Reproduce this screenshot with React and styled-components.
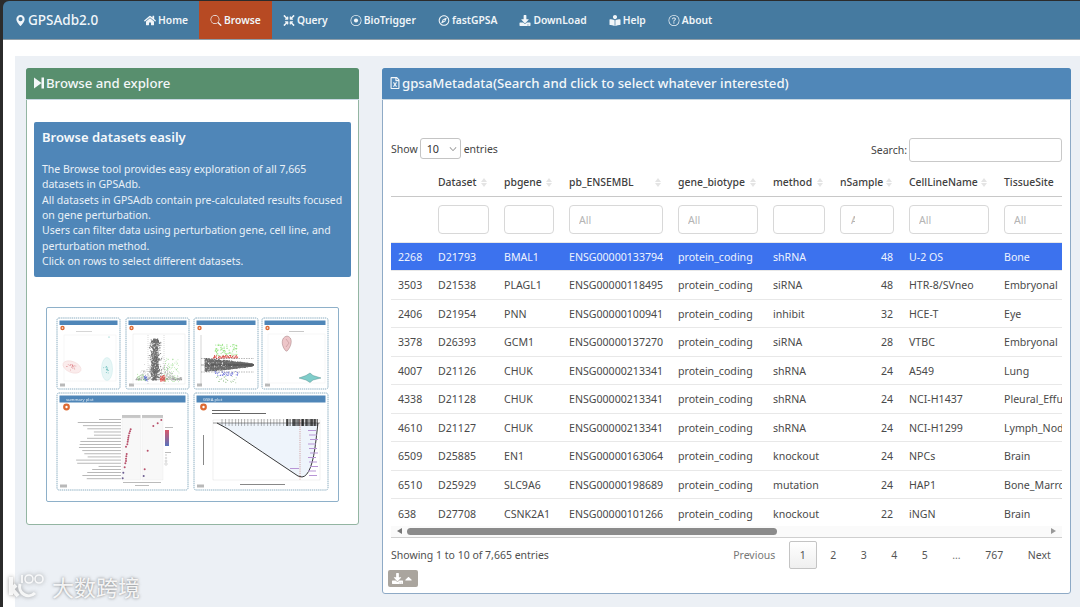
import React from "react";
import styled, { createGlobalStyle } from "styled-components";
import {
  FaHome, FaCompressArrowsAlt, FaDownload, FaBookReader, FaRegCompass, FaRegFileExcel, FaCaretUp,
} from "react-icons/fa";
import { BsSearch, BsRecordCircle, BsQuestionCircle, BsGeoAltFill, BsChevronDown } from "react-icons/bs";

const FONT = `"Noto Sans", "Open Sans", sans-serif`;

const Global = createGlobalStyle`
  html, body { margin: 0; padding: 0; background: #2b2b2b; }
  body { font-family: ${FONT}; font-size: 10.5px; color: #444; overflow: hidden; }
  * { box-sizing: border-box; }
`;

const Page = styled.div`
  width: 1080px; height: 607px; overflow: hidden; position: relative;
  padding: 1px 0 0 3px; background: #2b2b2b; display: flex; flex-direction: column;
`;
const Navbar = styled.nav`
  height: 39px; flex: none; display: flex; align-items: stretch; background: #457aa0; color: #fff;
  border-top-left-radius: 6px; border-bottom: 1px solid #8f9ea8; padding-left: 12px;
`;
const Brand = styled.div`
  width: 118px; display: flex; align-items: center; gap: 2px; font-size: 13.5px; font-weight: 500; color: #f1f6fa;
  svg { width: 11px; height: 13px; }
`;
const NavItem = styled.div`
  display: flex; align-items: center; gap: 2px; padding: 0 11px; font-size: 10.3px; font-weight: 600;
  color: #f0f5f8; background: ${(p) => (p.$active ? "#b74a23" : "transparent")};
  svg { width: 12px; height: 11px; flex: none; }
`;
const Strip = styled.div`
  height: 16px; flex: none; background: #fff;
`;
const Body = styled.div`
  flex: 1; display: flex; background: #fff; padding-left: 12px; min-height: 0;
`;
const Content = styled.main`
  flex: 1; background: #ecf0f5; padding: 12px 9px 0 11px; display: flex; gap: 23px; align-items: flex-start;
`;
const Panel = styled.section`
  width: ${(p) => p.$w}px; height: ${(p) => p.$h}px; flex: none; background: #fff; border-radius: 3px;
  border: 1px solid ${(p) => p.$line}; display: flex; flex-direction: column;
`;
const PanelHead = styled.header`
  height: 32px; flex: none; margin: -1px -1px 0; border-radius: 3px 3px 0 0; background: ${(p) => p.$bg};
  color: #f4f7f9; display: flex; align-items: center; gap: 2px; padding: 0 0 2px 8px;
  font-size: 13.2px; font-weight: 500; border-bottom: 1px solid #c9d8e2;
  svg { width: 10px; height: 12px; flex: none; }
`;
const LeftBody = styled.div`
  padding: 22px 7px 0; display: flex; flex-direction: column; gap: 30px;
`;
const Info = styled.div`
  background: #4f86b8; border-radius: 2px; height: 155px; padding: 6px 8px; color: #eaf1f7;
`;
const InfoTitle = styled.h3`
  margin: 0 0 16px; font-size: 13px; line-height: 18px; font-weight: 600; color: #f6f9fb;
`;
const InfoText = styled.p`
  margin: 0; font-size: 10.5px; line-height: 15.35px; white-space: nowrap;
`;
const Figure = styled.div`
  margin: 0 12px; height: 195px; border: 1px solid #8eb0c9; border-radius: 2px; background: #fff; overflow: hidden;
  svg { display: block; filter: blur(0.4px); }
`;
const RightBody = styled.div`
  flex: 1; padding: 38px 8px 0; display: flex; flex-direction: column; min-height: 0;
`;
const TopBar = styled.div`
  height: 23px; flex: none; display: flex; justify-content: space-between; align-items: flex-start;
`;
const Group = styled.label`
  display: flex; align-items: center; gap: 2px; height: 21px;
`;
const LenSelect = styled.div`
  width: 41px; height: 21px; margin: 0 1px 0 0; border: 1px solid #c4c4c4; border-radius: 3px; display: flex; align-items: center;
  justify-content: space-between; padding: 0 3px 0 6px; color: #333; font-size: 10.8px;
  svg { width: 8px; height: 8px; color: #555; }
`;
const SearchBox = styled.div`
  display: flex; align-items: center; gap: 2px; height: 24px;
`;
const SearchInput = styled.input`
  width: 153px; height: 24px; border: 1px solid #c9c9c9; border-radius: 3px; background: #fff; outline: none;
`;
const TableWrap = styled.div`
  height: 365px; flex: none; overflow: hidden; width: 671px; margin-top: 0;
`;
const Table = styled.table`
  table-layout: fixed; width: 720px; border-collapse: collapse; font-size: 10.6px; color: #4a4a4a;
`;
const Th = styled.th`
  height: 35px; padding: 8px 10px 0 7px; font-size: 10.4px; font-weight: 500; text-align: left; border-bottom: 1px solid #c8c8c8; white-space: nowrap; overflow: hidden; color: #404040;
`;
const ThInner = styled.div`
  display: flex; align-items: center; justify-content: space-between;
`;
const Sort = styled.span`
  display: inline-flex; flex-direction: column; gap: 1px;
  i { width: 0; height: 0; border-left: 3px solid transparent; border-right: 3px solid transparent; display: block; }
  i:first-child { border-bottom: 4px solid #e4e4e4; }
  i:last-child { border-top: 4px solid #e4e4e4; }
`;
const FilterCell = styled.td`
  height: 46px; padding: 1px 8px 0 7px; border-bottom: 0;
`;
const Filter = styled.input`
  width: 100%; height: 29px; border: 1px solid #d8d8d8; border-radius: 4px; outline: none; background: #fff; display: block;
  font-family: ${FONT}; font-size: 10.6px; padding: 0 ${(p) => (p.$narrow ? 38 : 6)}px 0 ${(p) => (p.$narrow ? 10 : 9)}px;
  &::placeholder { color: #b4b4b4; }
`;
const Row = styled.tr`
  height: 28.5px; background: ${(p) => (p.$sel ? "#3c72ee" : "#fff")}; color: ${(p) => (p.$sel ? "#eef3fd" : "#4a4a4a")};
  border-top: 1px solid #e8e8e8;
`;
const Td = styled.td`
  padding: 1px ${(p) => (p.$num ? 9 : 4)}px 0 7px; white-space: nowrap; overflow: hidden; text-align: ${(p) => (p.$num ? "right" : "left")};
`;
const ScrollBar = styled.div`
  height: 12px; flex: none; background: #fafafa; border-bottom: 1px solid #cfcfcf; display: flex; align-items: center;
  padding: 0 6px 1px 6px; gap: 5px; width: 671px;
`;
const Arrow = styled.i`
  width: 0; height: 0; border-top: 3.5px solid transparent; border-bottom: 3.5px solid transparent;
  ${(p) => (p.$dir === "l" ? "border-right: 5px solid #777;" : "border-left: 5px solid #999;")}
`;
const Track = styled.div`
  flex: 1; height: 7px;
`;
const Thumb = styled.div`
  width: 370px; height: 7px; background: #8b8b8b; border-radius: 4px;
`;
const Footer = styled.div`
  display: flex; justify-content: space-between; align-items: flex-start; padding-top: 3px; width: 671px;
`;
const Showing = styled.div`
  margin-top: 7px; color: #505050;
`;
const Pager = styled.div`
  display: flex; gap: 2px; align-items: center;
`;
const PageBtn = styled.div`
  height: 28px; padding: 0 10.25px; display: flex; align-items: center; color: ${(p) => (p.$muted ? "#777" : "#555")};
  border-radius: 2px; border: 1px solid ${(p) => (p.$cur ? "#c4c4c4" : "transparent")};
  background: ${(p) => (p.$cur ? "linear-gradient(#fff, #efefef)" : "transparent")};
`;
const DlBtn = styled.button`
  width: 30px; height: 17px; margin: 1px 0 0 -3px; border: 0; border-radius: 2px; background: #aaa59e; color: #fff; padding: 0;
  display: flex; align-items: center; justify-content: center; gap: 0; align-self: flex-start;
  svg { width: 11px; height: 11px; }
`;
const Watermark = styled.div`
  position: absolute; left: 9px; top: 570px; display: flex; align-items: center; gap: 3px; color: rgba(255,255,255,.9);
  font-family: "Noto Sans CJK SC", sans-serif; font-size: 22px; letter-spacing: 0; line-height: 32px;
  text-shadow: 0 0 3px rgba(70,70,70,.7);
  svg { filter: drop-shadow(0 0 2px rgba(70,70,70,.6)); }
`;

const SkipIcon = () => (
  <svg viewBox="0 0 10 12"><path d="M0 .5 L7.5 6 L0 11.5Z M7.5 .5 H10 V11.5 H7.5Z" fill="currentColor" /></svg>
);

const nav = [
  [FaHome, "Home"], [BsSearch, "Browse", true], [FaCompressArrowsAlt, "Query"], [BsRecordCircle, "BioTrigger"],
  [FaRegCompass, "fastGPSA"], [FaDownload, "DownLoad"], [FaBookReader, "Help"], [BsQuestionCircle, "About"],
];
const cols = [
  ["", 40], ["Dataset", 66], ["pbgene", 65], ["pb_ENSEMBL", 109], ["gene_biotype", 95], ["method", 67], ["nSample", 69], ["CellLineName", 95], ["TissueSite", 114],
];
const rows = [
  ["2268","D21793","BMAL1","ENSG00000133794","protein_coding","shRNA","48","U-2 OS","Bone"],
  ["3503","D21538","PLAGL1","ENSG00000118495","protein_coding","siRNA","48","HTR-8/SVneo","Embryonal"],
  ["2406","D21954","PNN","ENSG00000100941","protein_coding","inhibit","32","HCE-T","Eye"],
  ["3378","D26393","GCM1","ENSG00000137270","protein_coding","siRNA","28","VTBC","Embryonal"],
  ["4007","D21126","CHUK","ENSG00000213341","protein_coding","shRNA","24","A549","Lung"],
  ["4338","D21128","CHUK","ENSG00000213341","protein_coding","shRNA","24","NCI-H1437","Pleural_Effusion"],
  ["4610","D21127","CHUK","ENSG00000213341","protein_coding","shRNA","24","NCI-H1299","Lymph_Node"],
  ["6509","D25885","EN1","ENSG00000163064","protein_coding","knockout","24","NPCs","Brain"],
  ["6510","D25929","SLC9A6","ENSG00000198689","protein_coding","mutation","24","HAP1","Bone_Marrow"],
  ["638","D27708","CSNK2A1","ENSG00000101266","protein_coding","knockout","22","iNGN","Brain"],
];

function rng(seed) {
  let s = seed;
  return () => { s = (s * 16807) % 2147483647; return s / 2147483647; };
}
const gauss = (r) => (r() + r() + r() + r() - 2);

function Card({ x, y, w, h, title, big }) {
  return (
    <g>
      <rect x={x} y={y} width={w} height={h} rx="2" fill="#fff" stroke="#6f9bb3" strokeWidth="0.8" strokeDasharray="1.4 0.7" />
      <rect x={x + 2.5} y={y + 2.5} width={w - 5} height={big ? 7 : 4.5} fill="#4f86b8" />
      {title && <text x={x + 9} y={y + 8} fontSize="4.2" fill="#e8f0f6" fontFamily={FONT}>{title}</text>}
      <circle cx={x + (big ? 9.5 : 5.5)} cy={y + (big ? 14 : 10)} r={big ? 3.4 : 2.2} fill="#dd6a33" />
      <circle cx={x + (big ? 9.5 : 5.5)} cy={y + (big ? 14 : 10)} r={big ? 1.2 : 0.8} fill="#fff" />
      <rect x={x + 3} y={y + h - 5.5} width={big ? 7 : 5} height="3" fill="#b9b9b9" />
    </g>
  );
}

function Pca() {
  const r = rng(11);
  const d = [];
  for (let i = 0; i < 22; i++) d.push(<circle key={i} cx={72 + gauss(r) * 4} cy={366 + gauss(r) * 2.6 + gauss(r)} r=".45" fill="#d9747a" />);
  for (let i = 0; i < 14; i++) d.push(<circle key={"t" + i} cx={107 + gauss(r) * 2} cy={369 + gauss(r) * 4.5} r=".45" fill="#3ea9a6" />);
  return (
    <g>
      <Card x={57} y={318} w={63} h={71} />
      <rect x={64} y={335} width={52} height={46} fill="none" stroke="#eee" strokeWidth=".5" />
      <rect x={76} y={331} width={16} height=".8" fill="#ccc" />
      <ellipse cx={72} cy={367} rx={9.5} ry={5.5} transform="rotate(22 72 367)" fill="#fbecec" stroke="#eccaca" strokeWidth=".4" />
      <ellipse cx={107} cy={369} rx={5.5} ry={11.5} fill="#e7f6f6" stroke="#bde5e5" strokeWidth=".4" />
      {d}
      <circle cx={109} cy={337} r=".5" fill="#3ea9a6" />
    </g>
  );
}

function Volcano() {
  const r = rng(23);
  const d = [];
  for (let i = 0; i < 500; i++) {
    const x = 136 + r() * 46;
    const dist = Math.abs(x - 156);
    const y = 380 - r() * r() * Math.max(4, 40 - dist * 2.0);
    d.push(<circle key={"s" + i} cx={x} cy={y} r=".38" fill="#9c9c9c" />);
  }
  for (let i = 0; i < 650; i++) {
    d.push(<circle key={i} cx={155 + gauss(r) * 4} cy={339 + r() * 41} r=".5" fill="#666" />);
  }
  for (let i = 0; i < 90; i++) {
    const x = 164 + r() * 15;
    d.push(<circle key={"g" + i} cx={x} cy={358 + r() * 24} r=".4" fill="#7fd26f" />);
  }
  for (let i = 0; i < 30; i++) d.push(<circle key={"l" + i} cx={137 + r() * 9} cy={374 + r() * 7} r=".45" fill="#7fd26f" />);
  for (let i = 0; i < 25; i++) d.push(<circle key={"b" + i} cx={144 + r() * 4} cy={376 + r() * 5} r=".45" fill="#5560d8" />);
  for (let i = 0; i < 35; i++) d.push(<circle key={"r" + i} cx={160 + r() * 5} cy={375 + r() * 6} r=".5" fill="#e0403c" />);
  return (
    <g>
      <Card x={126} y={318} w={63} h={71} />
      <rect x={133} y={334} width={52} height={50} fill="none" stroke="#e5e5e5" strokeWidth=".5" />
      {d}
      <line x1="148" y1="335" x2="148" y2="384" stroke="#999" strokeWidth=".35" strokeDasharray="1 1" />
      <line x1="164" y1="335" x2="164" y2="384" stroke="#999" strokeWidth=".35" strokeDasharray="1 1" />
    </g>
  );
}

function Ma() {
  const r = rng(37);
  const d = [];
  for (let i = 0; i < 1100; i++) {
    const t = r();
    const x = 205 + t * 48;
    const s = 6 * Math.pow(1 - t, 0.7) + 0.5;
    d.push(<circle key={i} cx={x} cy={365 + (r() - .5) * 2 * s} r=".6" fill="#6a6a6a" />);
  }
  for (let i = 0; i < 80; i++) d.push(<circle key={"g" + i} cx={215 + r() * 22} cy={344 + r() * 12} r=".55" fill="#93e37f" />);
  for (let i = 0; i < 55; i++) d.push(<circle key={"r" + i} cx={212 + r() * 26} cy={355.5 + r() * 3} r=".55" fill="#d9413c" />);
  for (let i = 0; i < 50; i++) d.push(<circle key={"b" + i} cx={214 + r() * 24} cy={371 + r() * 5} r=".5" fill="#6d73d8" />);
  for (let i = 0; i < 28; i++) d.push(<circle key={"s" + i} cx={216 + r() * 22} cy={376 + r() * 7} r=".5" fill="#a5c99d" />);
  return (
    <g>
      <Card x={194} y={318} w={64} h={71} />
      <line x1="201" y1="335" x2="201" y2="385" stroke="#aaa" strokeWidth=".5" />
      {d}
      <line x1="201" y1="358.5" x2="254" y2="358.5" stroke="#333" strokeWidth=".35" strokeDasharray="1.5 1" />
      <line x1="201" y1="365" x2="254" y2="365" stroke="#222" strokeWidth=".4" />
      <line x1="201" y1="372" x2="254" y2="372" stroke="#333" strokeWidth=".35" strokeDasharray="1.5 1" />
    </g>
  );
}

function Violin() {
  return (
    <g>
      <Card x={262} y={318} w={66} h={71} />
      <rect x={268} y={334} width={57} height={49} fill="none" stroke="#eee" strokeWidth=".5" />
      <rect x={289} y={331} width={15} height=".8" fill="#bbb" />
      <path d="M287 336 C293 337 292 345 288 350 C287 351.5 286 351.5 285 350 C281 345 281 337 287 336Z" fill="#edc5c8" stroke="#8a5f63" strokeWidth=".4" />
      <path d="M286 339 L289 343 L286 347" fill="none" stroke="#8a5f63" strokeWidth=".3" />
      <path d="M299 378 L306 375.5 L310 373 L313 375.5 L321 378 L313 380 L310 382.5 L306 380Z" fill="#7fcdca" stroke="#417f7e" strokeWidth=".4" />
    </g>
  );
}

const sumDots = [
  [272, 118], [270, 124], [268, 130], [266, 137], [265, 143], [264, 149], [263, 155], [262, 163], [258, 170],
  [260, 192], [259, 199], [258, 206], [258, 213], [256, 220], [254, 232], [250, 248], [248, 265],
  [364, 90], [353, 100], [340, 108], [323, 182], [314, 238], [311, 258],
];

function Summary() {
  const r = rng(51);
  const lines = [];
  for (let i = 0; i < 20; i++) {
    const y = 419.5 + i * 3.12;
    const w = 22 + r() * 30;
    lines.push(<rect key={"l" + i} x={121 - w} y={y - 0.35} width={w} height=".7" fill="#9a9a9a" />);
  }
  return (
    <g>
      <Card x={57} y={393} w={131} h={97} title="summary plot" big />
      <rect x={122} y={415} width={18.5} height={3} fill="#c6c6c6" />
      <rect x={142} y={415} width={21} height={3} fill="#c6c6c6" />
      <rect x={122} y={418} width={18.5} height={62} fill="#f8f8f8" stroke="#e2e2e2" strokeWidth=".3" />
      <rect x={142} y={418} width={21} height={62} fill="#f8f8f8" stroke="#e2e2e2" strokeWidth=".3" />
      {lines}
      {sumDots.map(([x, y], i) => (
        <circle key={i} cx={40 + x / 3} cy={390 + y / 3} r="1" fill={y > 240 ? "#6a5c90" : "#b8506a"} />
      ))}
      <rect x={123} y={482} width={38} height=".8" fill="#aaa" />
      <rect x={135} y={485} width={14} height=".8" fill="#aaa" />
      <defs>
        <linearGradient id="cb" x1="0" y1="0" x2="0" y2="1"><stop offset="0" stopColor="#d9596a" /><stop offset="1" stopColor="#5872bd" /></linearGradient>
      </defs>
      <rect x={165} y={430} width={4} height={16} fill="url(#cb)" />
      <rect x={165} y={427} width={8} height=".8" fill="#aaa" />
      <rect x={165} y={452} width={6} height=".8" fill="#aaa" />
      {[455, 458, 461, 464].map((y, i) => <circle key={y} cx={166} cy={y} r={0.5 + i * .25} fill="none" stroke="#888" strokeWidth=".3" />)}
    </g>
  );
}

function Gsea() {
  const r = rng(71);
  const ticks = [];
  for (let i = 0; i < 22; i++) { const x = 222 + i * 3.2 + r(); ticks.push(<line key={i} x1={x} x2={x} y1="419" y2="426" stroke="#444" strokeWidth=".4" />); }
  for (let i = 0; i < 60; i++) { const x = 285 + r() * 33; ticks.push(<line key={"d" + i} x1={x} x2={x} y1="419" y2="426" stroke="#222" strokeWidth=".45" />); }
  const labels = [];
  for (let i = 0; i < 11; i++) labels.push(<rect key={i} x={308 + (i % 3)} y={430 + i * 4.5} width={8} height="1" fill="#b895d6" />);
  return (
    <g>
      <Card x={194} y={393} w={134} h={97} title="GSEA plot" big />
      <rect x={212} y={410} width={28} height="1" fill="#666" />
      <rect x={212} y={413} width={54} height="1" fill="#666" />
      <rect x={213} y={420} width={107} height={60} fill="#fff" stroke="#d9d9d9" strokeWidth=".4" />
      <path d="M217 423 L228 429 Q262 452 298 476 L302 477 Q312 476 316 440 L318 423Z" fill="#eef4fb" />
      <line x1="213" y1="423" x2="320" y2="423" stroke="#333" strokeWidth=".5" />
      {ticks}
      <line x1="300" y1="420" x2="300" y2="480" stroke="#b5524a" strokeWidth=".5" strokeDasharray="1.2 1" />
      <path d="M217 423 L228 429 Q262 452 298 476 L302 477 Q312 476 316 440 L318 423" fill="none" stroke="#222" strokeWidth=".9" />
      {labels}
      <rect x={290} y={468} width={9} height="1" fill="#b895d6" />
      <rect x={240} y={484} width={45} height="1" fill="#888" />
      <rect x={203} y={435} width="1" height={30} fill="#888" />
    </g>
  );
}

const Logo = () => (
  <svg width="40" height="30" viewBox="0 0 40 30" fill="none">
    <path d="M2 6 V24 M7 14 L3 18 L9 25" stroke="#fff" strokeWidth="4" opacity=".85" />
    <path d="M11 13 A 9 9 0 0 0 26 22" stroke="#fff" strokeWidth="3" opacity=".85" />
    <path d="M13 4 V12" stroke="#fff" strokeWidth="1.8" opacity=".85" />
    <circle cx="20" cy="8" r="4" stroke="#fff" strokeWidth="1.6" opacity=".85" />
    <circle cx="30" cy="8" r="4" stroke="#fff" strokeWidth="1.6" opacity=".85" />
  </svg>
);

export default function App() {
  return (
    <Page>
      <Global />
      <Navbar>
        <Brand><BsGeoAltFill /><span>GPSAdb2.0</span></Brand>
        {nav.map(([I, t, a]) => (
          <NavItem key={t} $active={a}><I /><span>{t}</span></NavItem>
        ))}
      </Navbar>
      <Strip />
      <Body>
        <Content>
          <Panel $w={333} $h={457} $line="#93b5a2">
            <PanelHead $bg="#588f6e"><SkipIcon /><span>Browse and explore</span></PanelHead>
            <LeftBody>
              <Info>
                <InfoTitle>Browse datasets easily</InfoTitle>
                <InfoText>
                  The Browse tool provides easy exploration of all 7,665<br />
                  datasets in GPSAdb.<br />
                  All datasets in GPSAdb contain pre-calculated results focused<br />
                  on gene perturbation.<br />
                  Users can filter data using perturbation gene, cell line, and<br />
                  perturbation method.<br />
                  Click on rows to select different datasets.
                </InfoText>
              </Info>
              <Figure>
                <svg width="293" height="193" viewBox="47 308 293 193">
                  <Pca /><Volcano /><Ma /><Violin /><Summary /><Gsea />
                </svg>
              </Figure>
            </LeftBody>
          </Panel>
          <Panel $w={689} $h={526} $line="#8eaac6">
            <PanelHead $bg="#5087b8"><FaRegFileExcel /><span>gpsaMetadata(Search and click to select whatever interested)</span></PanelHead>
            <RightBody>
              <TopBar>
                <Group>Show <LenSelect>10 <BsChevronDown /></LenSelect> entries</Group>
                <SearchBox>Search: <SearchInput /></SearchBox>
              </TopBar>
              <TableWrap>
                <Table>
                  <colgroup>{cols.map(([n, w], i) => <col key={i} width={w} />)}</colgroup>
                  <thead>
                    <tr>
                      {cols.map(([n], i) => (
                        <Th key={i}>
                          <ThInner>
                            <span>{n}</span>
                            {i > 0 && i < 8 && <Sort><i /><i /></Sort>}
                          </ThInner>
                        </Th>
                      ))}
                    </tr>
                    <tr>
                      <FilterCell />
                      {cols.slice(1).map(([n], i) => {
                        const ph = [3, 4, 6, 7, 8].includes(i + 1) ? "All" : "";
                        return <FilterCell key={n}><Filter placeholder={ph} $narrow={i + 1 === 6} /></FilterCell>;
                      })}
                    </tr>
                  </thead>
                  <tbody>
                    {rows.map((r, i) => (
                      <Row key={r[0]} $sel={i === 0}>
                        {r.map((c, j) => <Td key={j} $num={j === 6}>{c}</Td>)}
                      </Row>
                    ))}
                  </tbody>
                </Table>
              </TableWrap>
              <ScrollBar>
                <Arrow $dir="l" />
                <Track><Thumb /></Track>
                <Arrow $dir="r" />
              </ScrollBar>
              <Footer>
                <Showing>Showing 1 to 10 of 7,665 entries</Showing>
                <Pager>
                  <PageBtn $muted>Previous</PageBtn>
                  <PageBtn $cur>1</PageBtn>
                  <PageBtn>2</PageBtn><PageBtn>3</PageBtn><PageBtn>4</PageBtn><PageBtn>5</PageBtn>
                  <PageBtn $muted>…</PageBtn>
                  <PageBtn>767</PageBtn>
                  <PageBtn>Next</PageBtn>
                </Pager>
              </Footer>
              <DlBtn><FaDownload /><FaCaretUp /></DlBtn>
            </RightBody>
          </Panel>
        </Content>
      </Body>
      <Watermark><Logo /><span>大数跨境</span></Watermark>
    </Page>
  );
}
